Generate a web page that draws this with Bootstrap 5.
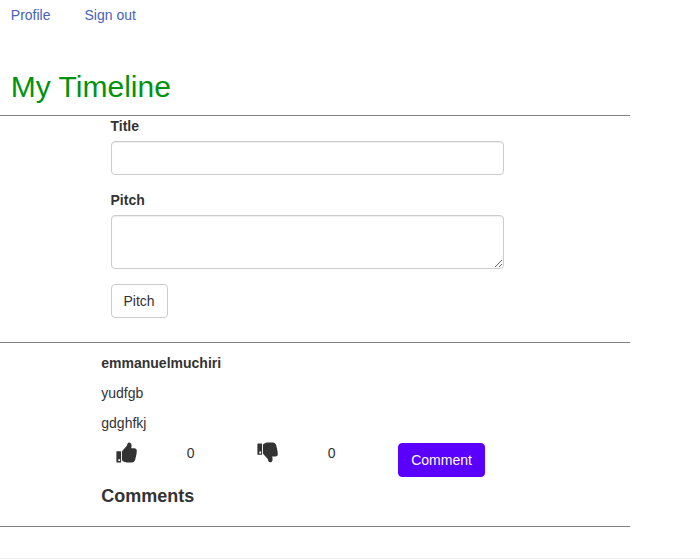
<!DOCTYPE html>
<html lang="en">
<head>
<meta charset="utf-8">
<meta name="viewport" content="width=device-width, initial-scale=1">
<title>My Timeline</title>
<link href="https://cdn.jsdelivr.net/npm/bootstrap@5.3.0/dist/css/bootstrap.min.css" rel="stylesheet">
<style>
body { font: 14px/20px "Liberation Sans", Arial, sans-serif; color: #333; background: #fff; overflow: hidden; }
.top-links { height: 70px; padding: 5px 10.8px; gap: 34px; }
.top-links a { color: #4662b9; }
.timeline { width: 630px; }
.timeline h2 { font-size: 30px; line-height: 33px; color: #00930f; height: 45px; padding-left: 10.8px; }
.section-line { border-bottom: 1px solid #808080; }
.pitch-form { height: 227px; padding-left: 110.5px; }
.pitch-form label { margin-bottom: 5px; }
.pitch-form .form-control { width: 393px; height: 34px; font-size: 14px; border-color: #ccc; border-radius: 4px; box-shadow: inset 0 1px 1px rgba(0,0,0,.075); margin-bottom: 15px; }
.pitch-form textarea.form-control { height: 54px; min-height: 54px; }
.btn { font-size: 14px; line-height: 20px; padding: 6px 12px; border-radius: 4px; }
.btn-pitch { color: #333; border-color: #ccc; background: #fff; }
.btn-comment, .btn-comment:hover { color: #fff; background: #5a00ff; border-color: #5a00ff; }
.post { height: 184px; padding: 10px 0 0 101.3px; }
.post p { margin-bottom: 10px; }
.reactions { height: 34px; }
.thumb { width: 141px; padding-left: 14.7px; }
.thumb svg { width: 21px; height: 21px; margin-top: -1px; }
.thumb span { margin-left: 49.8px; }
.btn-comment { margin-left: 14.9px; }
.post h4 { font-size: 18px; line-height: 20px; margin-top: 9px; }
.footer-line { height: 32px; border-bottom: 1px solid #eee; }
</style>
</head>
<body>
<nav class="d-flex top-links">
  <a class="text-decoration-none" href="#">Profile</a>
  <a class="text-decoration-none" href="#">Sign out</a>
</nav>
<main class="timeline">
  <h2 class="mb-0 fw-normal">My Timeline</h2>
  <div class="section-line"></div>
  <form class="pitch-form section-line">
    <label class="d-block fw-bold" for="title">Title</label>
    <input class="form-control" id="title" type="text">
    <label class="d-block fw-bold" for="pitch">Pitch</label>
    <textarea class="form-control" id="pitch"></textarea>
    <button class="btn btn-pitch" type="button">Pitch</button>
  </form>
  <article class="post section-line">
    <p class="fw-bold">emmanuelmuchiri</p>
    <p>yudfgb</p>
    <p>gdghfkj</p>
    <div class="d-flex align-items-start reactions">
      <div class="d-flex thumb">
        <svg viewBox="0 0 21 21" fill="#333" aria-label="Like"><path fill-rule="evenodd" d="M.8 9.2h3.9q.4 0 .4.4v10.5q0 .4-.4.4H.8q-.4 0-.4-.4V9.6q0-.4.4-.4ZM2.3 17.2v1.8h1.8v-1.8ZM6 10q0-.9.6-1.6l4-4.3c.6-.8.4-2.500 1.500-3.200 1.800-1 3.500.5 3.500 2.800 0 1.100-.3 1.800-.4 2.600h3.400q2.200.2 2.200 2.300 0 1-.2 1.700.2 1.600-.4 2.600 0 1.700-.6 2.700-.1 2-.9 3.100-.8 1.500-2.500 1.700h-5.100c-1.700 0-2.700-.5-4.200-1.200q-.9-.4-.9-1.400Z"/></svg>
        <span>0</span>
      </div>
      <div class="d-flex thumb">
        <svg viewBox="0 0 21 21" fill="#333" aria-label="Dislike"><path fill-rule="evenodd" d="M.8 1.500h3.900q.4 0 .4.4v10.500q0 .4-.4.4H.8q-.4 0-.4-.4V1.900q0-.4.4-.4ZM2.300 9.600v1.800h1.800V9.600ZM6 11q0 .9.6 1.500l4 4.300c.6.8.4 2.500 1.500 3.200 1.800 1 3.500-.5 3.500-2.800 0-1.100-.3-1.800-.4-2.600h3.400q2.200-.2 2.200-2.300 0-1-.2-1.700.2-1.600-.4-2.600 0-1.700-.6-2.700-.1-2-.9-3.100Q17.900.7 16.200.5h-5.100C9.400.5 8.400 1 6.900 1.700Q6 2.100 6 3.100Z"/></svg>
        <span>0</span>
      </div>
      <button class="btn btn-comment" type="button">Comment</button>
    </div>
    <h4 class="fw-bold mb-0">Comments</h4>
  </article>
</main>
<div class="footer-line"></div>
<script src="https://cdn.jsdelivr.net/npm/bootstrap@5.3.0/dist/js/bootstrap.bundle.min.js"></script>
</body>
</html>
